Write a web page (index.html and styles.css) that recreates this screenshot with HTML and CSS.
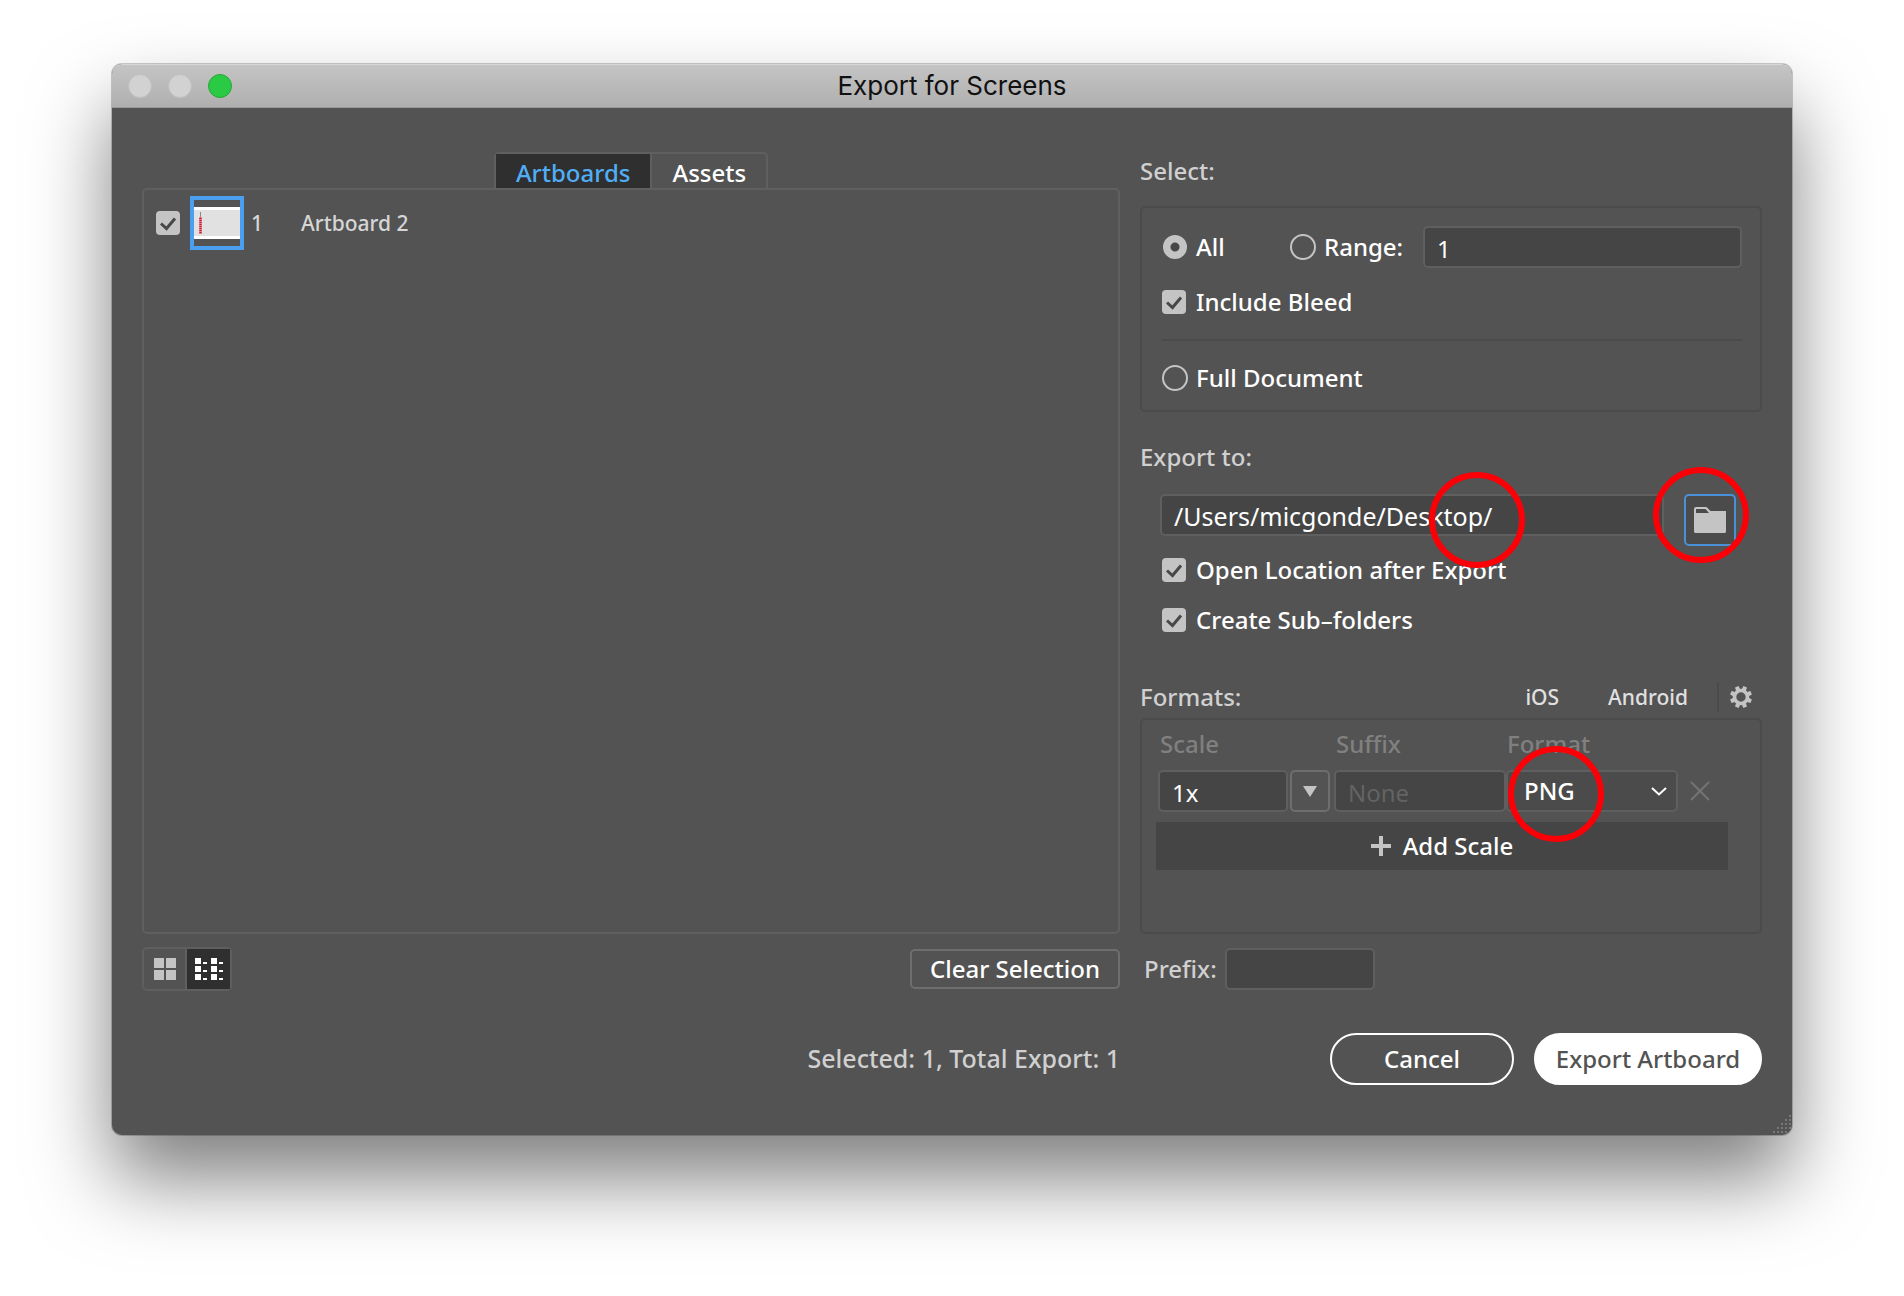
FILE: index.html
```html
<!DOCTYPE html>
<html lang="en">
<head>
<meta charset="utf-8">
<title>Export for Screens</title>
<link rel="stylesheet" href="styles.css">
</head>
<body>
<main class="window">
  <header class="titlebar">
    <div class="lights">
      <button class="light" type="button" aria-label="Close"></button>
      <button class="light" type="button" aria-label="Minimize"></button>
      <button class="light light-zoom" type="button" aria-label="Zoom"></button>
    </div>
    <h1 class="title">Export for Screens</h1>
  </header>

  <form class="content">
    <section class="artboards">
      <div class="tabs">
        <button class="tab tab-active" type="button">Artboards</button>
        <button class="tab" type="button">Assets</button>
      </div>
      <div class="list">
        <div class="list-row">
          <input class="check" type="checkbox" id="artboard-1" checked>
          <svg class="thumb" viewBox="0 0 54 54" aria-hidden="true">
            <rect x="2" y="2" width="50" height="50" fill="#535353" stroke="#4a9ff0" stroke-width="4"/>
            <rect x="4" y="11" width="46" height="32" fill="#fff"/>
            <rect x="4" y="14" width="46" height="26" fill="#e1e1e1"/>
            <path d="M10.500 16v6" stroke="#888" stroke-width="1"/>
            <path d="M10.500 21v17" stroke="#ef7f8c" stroke-width="3"/>
            <path d="M10.500 22v16" stroke="#b02035" stroke-width="2" stroke-dasharray="1 1"/>
          </svg>
          <span class="list-index">1</span>
          <label class="list-name" for="artboard-1">Artboard 2</label>
        </div>
      </div>
    </section>

    <section class="settings">
      <h2 class="heading">Select:</h2>
      <div class="group select-group">
        <div class="range-row">
          <label class="option"><input class="radio" type="radio" name="scope" checked>All</label>
          <label class="option"><input class="radio" type="radio" name="scope">Range:</label>
          <input class="field" type="text" value="1" aria-label="Range">
        </div>
        <label class="option"><input class="check" type="checkbox" checked>Include Bleed</label>
        <hr class="divider">
        <label class="option"><input class="radio" type="radio" name="scope">Full Document</label>
      </div>

      <label class="heading heading-export" for="path">Export to:</label>
      <div class="path-row">
        <div class="path-field">
          <input class="field field-path" type="text" id="path" value="/Users/micgonde/Desktop/">
          <span class="ring ring-path"></span>
        </div>
        <div class="browse-wrap">
          <button class="browse" type="button" aria-label="Choose folder">
            <svg viewBox="0 0 32 26" width="32" height="26" aria-hidden="true"><path fill="#c4c4c4" d="M2 0h10.500l4 4H32v20.500a1.500 1.500 0 0 1-1.500 1.500h-29A1.500 1.500 0 0 1 0 24.500V2a2 2 0 0 1 2-2z"/><path fill="#4b4b4b" d="M2 2h9.500l3.500 4H2z"/></svg>
          </button>
          <span class="ring ring-browse"></span>
        </div>
      </div>
      <div class="export-options">
        <label class="option"><input class="check" type="checkbox" checked>Open Location after Export</label>
        <label class="option"><input class="check" type="checkbox" checked>Create Sub–folders</label>
      </div>

      <div class="formats-head">
        <h2 class="heading">Formats:</h2>
        <button class="preset" type="button">iOS</button>
        <button class="preset" type="button">Android</button>
        <button class="gear" type="button" aria-label="Advanced settings">
          <svg viewBox="-11 -11 22 22" width="22" height="22" aria-hidden="true">
            <circle r="6.500" fill="none" stroke="#c4c4c4" stroke-width="3.600"/>
            <g fill="#c4c4c4">
              <path id="cog" d="M-2.200-7.500L-1.900-11H1.900L2.200-7.500z" transform="rotate(22.500)"/>
              <use href="#cog" transform="rotate(45)"/><use href="#cog" transform="rotate(90)"/><use href="#cog" transform="rotate(135)"/><use href="#cog" transform="rotate(180)"/><use href="#cog" transform="rotate(225)"/><use href="#cog" transform="rotate(270)"/><use href="#cog" transform="rotate(315)"/>
            </g>
          </svg>
        </button>
      </div>
      <div class="group formats-group">
        <div class="scales">
          <label class="column-label" for="scale">Scale</label>
          <label class="column-label" for="suffix">Suffix</label>
          <label class="column-label" for="format">Format</label>
          <span></span>
          <div class="combo">
            <input class="field" type="text" id="scale" value="1x">
            <button class="combo-button" type="button" aria-label="Scale presets">
              <svg viewBox="0 0 14 11" width="14" height="11" aria-hidden="true"><path fill="#c4c4c4" d="M0 0h14L7 11z"/></svg>
            </button>
          </div>
          <input class="field" type="text" id="suffix" placeholder="None">
          <div class="format">
            <select class="field format-select" id="format"><option>PNG</option><option>JPG</option><option>SVG</option><option>PDF</option></select>
            <svg class="chevron" viewBox="0 0 16 9" width="16" height="9" aria-hidden="true"><path d="M1 1l7 6.500L15 1" fill="none" stroke="#fff" stroke-width="2"/></svg>
            <span class="ring ring-format"></span>
          </div>
          <button class="remove" type="button" aria-label="Remove scale">
            <svg viewBox="0 0 20 20" width="20" height="20" aria-hidden="true"><path d="M1 1l18 18M19 1L1 19" stroke="#747474" stroke-width="2"/></svg>
          </button>
        </div>
        <button class="add-scale" type="button">
          <svg viewBox="0 0 20 20" width="20" height="20" aria-hidden="true"><path d="M10 0v20M0 10h20" stroke="#c4c4c4" stroke-width="4"/></svg>
          Add Scale
        </button>
      </div>
    </section>

    <div class="list-tools">
      <div class="views">
        <button class="view" type="button" aria-label="Thumbnail view">
          <svg viewBox="0 0 22 22" width="22" height="22" aria-hidden="true"><path fill="#c4c4c4" d="M0 0h10v10H0zM12 0h10v10H12zM0 12h10v10H0zM12 12h10v10H12z"/></svg>
        </button>
        <button class="view view-active" type="button" aria-label="List view">
          <svg viewBox="0 0 28 22" width="28" height="22" aria-hidden="true"><path fill="#fff" d="M0 0h6v6H0zM0 8h6v6H0zM0 16h6v6H0zM16 0h6v6h-6zM16 8h6v6h-6zM16 16h6v6h-6zM8 4h4v2H8zM8 12h4v2H8zM8 20h4v2H8zM24 4h4v2h-4zM24 12h4v2h-4zM24 20h4v2h-4z"/></svg>
        </button>
      </div>
      <button class="clear" type="button">Clear Selection</button>
    </div>
    <div class="prefix-row">
      <label class="prefix-label" for="prefix">Prefix:</label>
      <input class="field prefix-field" type="text" id="prefix">
    </div>

    <p class="summary">Selected: 1, Total Export: 1</p>
    <div class="actions">
      <button class="pill pill-outline" type="button">Cancel</button>
      <button class="pill pill-solid" type="button">Export Artboard</button>
    </div>
  </form>
  <svg class="grip" viewBox="0 0 18 20" width="18" height="20" aria-hidden="true"><path fill="#777" d="M16 0h2v2h-2zM12 4h2v2h-2zM16 4h2v2h-2zM8 8h2v2H8zM12 8h2v2h-2zM16 8h2v2h-2zM4 12h2v2H4zM8 12h2v2H8zM12 12h2v2h-2zM16 12h2v2h-2zM0 16h2v2H0zM4 16h2v2H4zM8 16h2v2H8zM12 16h2v2h-2z"/></svg>
</main>
</body>
</html>
```
FILE: styles.css
```css
* {
  box-sizing: border-box;
}

body {
  margin: 0;
  min-height: 100vh;
  padding: 64px 112px 160px;
  background: #fff;
  color: #fff;
  font: 500 24px/32px "Noto Sans", sans-serif;
}

button,
input,
select {
  margin: 0;
  padding: 0;
  border: 0;
  background: none;
  color: inherit;
  font: inherit;
}

svg {
  display: block;
  flex: none;
}

/* Window frame */
.window {
  position: relative;
  border-radius: 10px;
  background: #535353;
  box-shadow: 0 0 0 1px rgba(0, 0, 0, 0.2), 0 44px 80px rgba(0, 0, 0, 0.5);
}

.titlebar {
  display: grid;
  grid-template-columns: 1fr auto 1fr;
  align-items: center;
  height: 44px;
  padding: 0 16px;
  border-top: 1px solid #d6d6d6;
  border-bottom: 1px solid #999;
  border-radius: 10px 10px 0 0;
  background: linear-gradient(#c4c4c4, #afafaf);
}

.lights {
  display: flex;
  gap: 16px;
}

.light {
  width: 24px;
  height: 24px;
  border: 1px solid #c0c0c0;
  border-radius: 50%;
  background: #d2d2d2;
}

.light-zoom {
  border-color: #25a835;
  background: #2aca44;
}

.title {
  margin: 0;
  color: #111;
  font: 400 26px/32px Inter, sans-serif;
}

.content {
  display: grid;
  grid-template-columns: minmax(0, 978fr) minmax(0, 622fr);
  column-gap: 20px;
  padding: 44px 30px 50px;
}

/* Artboard list */
.artboards {
  display: flex;
  flex-direction: column;
}

.tabs {
  display: flex;
  align-self: center;
  height: 36px;
  border: 2px solid #5f5f5f;
  border-bottom: 0;
  border-radius: 5px 5px 0 0;
}

.tab {
  padding: 3px 20px 0;
}

.tab-active {
  border-right: 2px solid #5f5f5f;
  background: #2f2f2f;
  color: #51aef5;
}

.list {
  flex: 1;
  padding: 6px 12px;
  border: 2px solid #5f5f5f;
  border-radius: 5px;
}

.list-row {
  display: flex;
  align-items: center;
  color: #d6d6d6;
  font-size: 21px;
}

.thumb {
  width: 54px;
  height: 54px;
  margin: 0 7px 0 10px;
}

.list-index {
  width: 50px;
}

/* Controls */
.check,
.radio {
  flex: none;
  width: 24px;
  height: 24px;
  appearance: none;
}

.check {
  border-radius: 4px;
  background: #c4c4c4;
}

.check:checked {
  background: #c4c4c4 url("data:image/svg+xml,%3Csvg xmlns='http://www.w3.org/2000/svg' viewBox='0 0 24 24'%3E%3Cpath d='M5 12.500l5.500 5L19 7.500' fill='none' stroke='%23484848' stroke-width='3'/%3E%3C/svg%3E");
}

.radio {
  width: 26px;
  height: 26px;
  border: 2px solid #c4c4c4;
  border-radius: 50%;
}

.radio:checked {
  width: 24px;
  height: 24px;
  margin: 1px;
  background: radial-gradient(circle, #484848 4px, #c4c4c4 5px);
}

.option {
  display: flex;
  align-items: center;
  gap: 10px;
  height: 32px;
}

.option .radio {
  margin-right: -2px;
}

.option .radio:checked {
  margin-right: -1px;
}

.field {
  width: 100%;
  min-width: 0;
  height: 42px;
  padding: 2px 12px 0;
  border: 2px solid #5f5f5f;
  border-radius: 5px;
  background: #454545;
  font-weight: 400;
}

.field::placeholder {
  color: #636363;
  opacity: 1;
}

.heading {
  display: flex;
  align-items: center;
  height: 38px;
  margin: 0;
  color: #d0d0d0;
  font: inherit;
}

.group {
  border: 2px solid #4b4b4b;
  border-radius: 5px;
}

/* Settings column */
.settings {
  display: flex;
  flex-direction: column;
}

.select-group {
  height: 206px;
  margin-top: 16px;
  padding: 18px 18px 0 20px;
}

.range-row {
  display: grid;
  grid-template-columns: 118px 123px 1fr;
  column-gap: 10px;
  align-items: center;
  height: 42px;
  margin-bottom: 18px;
}

.divider {
  height: 2px;
  margin: 21px 0;
  border: 0;
  background: #4b4b4b;
}

.heading-export {
  margin-top: 26px;
}

.path-row {
  display: flex;
  gap: 20px;
  margin-top: 18px;
  padding: 0 26px 0 20px;
}

.path-field {
  position: relative;
  flex: 1;
}

.field-path {
  font-size: 25px;
}

.browse-wrap {
  position: relative;
}

.browse {
  display: grid;
  place-items: center;
  width: 52px;
  height: 52px;
  border: 2px solid #4a90d9;
  border-radius: 5px;
  background: #4b4b4b;
}

.export-options {
  display: grid;
  gap: 18px;
  padding: 8px 0 0 22px;
}

.ring {
  position: absolute;
  width: 96px;
  height: 96px;
  border: 6px solid #fb0007;
  border-radius: 50%;
  pointer-events: none;
}

.ring-path {
  top: -22px;
  left: 269px;
}

.ring-browse {
  top: -27px;
  right: -13px;
}

.ring-format {
  top: -24px;
  left: 2px;
}

/* Formats */
.formats-head {
  display: flex;
  align-items: center;
  height: 38px;
  margin: 42px 0 2px;
}

.formats-head .heading {
  flex: 1;
}

.preset {
  margin-right: 49px;
  color: #e0e0e0;
  font-size: 21px;
}

.preset + .gear {
  margin-left: -20px;
}

.gear {
  padding: 4px 10px 4px 11px;
  border-left: 2px solid #4b4b4b;
}

.formats-group {
  height: 216px;
  padding: 8px 32px 0 14px;
}

.scales {
  display: grid;
  grid-template-columns: 172px 172px 168px auto;
  column-gap: 4px;
  justify-content: start;
  align-items: center;
  padding-left: 2px;
}

.column-label {
  height: 42px;
  padding-left: 2px;
  color: #808080;
}

.column-label[for="format"] {
  padding-left: 0;
  margin-left: -3px;
}

.combo {
  display: flex;
  gap: 2px;
}

.combo-button {
  display: grid;
  flex: none;
  place-items: center;
  width: 40px;
  border: 2px solid #6e6e6e;
  border-radius: 5px;
}

.format {
  position: relative;
  display: grid;
  align-items: center;
  margin-left: -4px;
}

.format-select {
  grid-area: 1 / 1;
  padding: 0 16px;
  background: #4b4b4b;
  font-weight: 500;
  appearance: none;
}

.chevron {
  grid-area: 1 / 1;
  justify-self: end;
  margin-right: 11px;
  pointer-events: none;
}

.remove {
  padding: 4px 8px;
}

.add-scale {
  display: flex;
  justify-content: center;
  align-items: center;
  gap: 12px;
  width: 100%;
  height: 48px;
  margin-top: 10px;
  background: #454545;
}

/* Row below the panels */
.list-tools,
.prefix-row {
  display: flex;
  align-items: center;
  height: 44px;
  margin-top: 13px;
}

.list-tools {
  justify-content: space-between;
}

.views {
  display: flex;
  height: 44px;
  border: 2px solid #5f5f5f;
  border-radius: 5px;
}

.view {
  display: grid;
  place-items: center;
  width: 41px;
}

.view-active {
  width: 45px;
  border-left: 2px solid #5f5f5f;
  background: #2f2f2f;
}

.clear {
  height: 40px;
  padding: 0 18px;
  border: 2px solid #6e6e6e;
  border-radius: 5px;
}

.prefix-row {
  gap: 8px;
  padding-left: 4px;
}

.prefix-label {
  color: #d0d0d0;
}

.prefix-field {
  width: 150px;
}

/* Footer */
.summary {
  margin: 51px 0 0;
  color: #d0d0d0;
  font-size: 25px;
  text-align: right;
}

.actions {
  display: flex;
  justify-content: flex-end;
  gap: 20px;
  margin-top: 42px;
}

.pill {
  height: 52px;
  border: 2px solid #fff;
  border-radius: 26px;
}

.pill-outline {
  width: 184px;
}

.pill-solid {
  width: 228px;
  background: #fff;
  color: #535353;
}

.grip {
  position: absolute;
  right: 1px;
  bottom: 0;
}
```
